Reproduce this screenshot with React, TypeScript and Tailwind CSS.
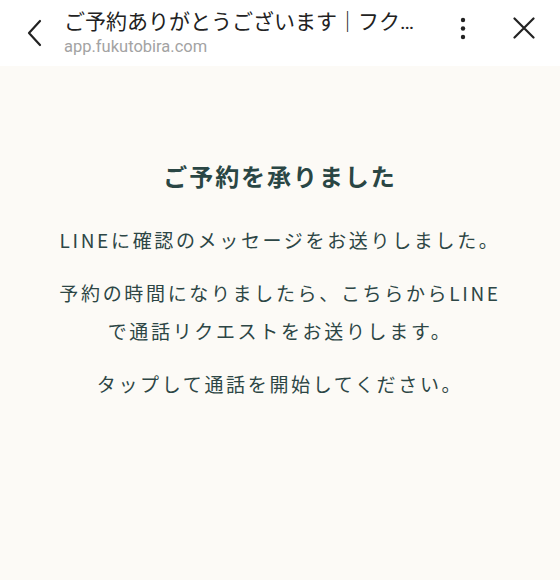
export default function App() {
  return (
    <div
      className="flex min-h-[580px] w-full flex-col bg-[#fcfaf6]"
      style={{ fontFamily: '"Noto Sans CJK JP", "Noto Sans", sans-serif' }}
    >
      {/* ブラウザヘッダー */}
      <header className="flex h-[66px] shrink-0 items-center bg-white">
        <div className="flex w-[64px] shrink-0 justify-center pl-[6px]">
          <svg width="20" height="28" viewBox="0 0 20 28" fill="none">
            <path d="M15 2 L4 14 L15 26" stroke="#222" strokeWidth="2.2" strokeLinecap="round" strokeLinejoin="round" />
          </svg>
        </div>
        <div className="flex min-w-0 flex-1 flex-col">
          <p
            className="truncate text-[21px] leading-[26px] text-[#222]"
            style={{ fontFamily: 'Roboto, "Noto Sans CJK JP", sans-serif' }}
          >
            ご予約ありがとうございます｜フク…
          </p>
          <p
            className="mt-[2px] text-[16.5px] leading-[20px] text-[#a3a3a3]"
            style={{ fontFamily: 'Roboto, "Noto Sans", sans-serif' }}
          >
            app.fukutobira.com
          </p>
        </div>
        <div className="flex w-[82px] shrink-0 justify-center self-start pt-[17px]">
          <svg width="6" height="24" viewBox="0 0 6 24">
            <circle cx="3" cy="3" r="2.2" fill="#222" />
            <circle cx="3" cy="11.5" r="2.2" fill="#222" />
            <circle cx="3" cy="20" r="2.2" fill="#222" />
          </svg>
        </div>
        <div className="flex w-[56px] shrink-0 justify-center self-start pr-[16px] pt-[17px]">
          <svg width="22" height="22" viewBox="0 0 22 22">
            <path d="M1.5 1.5 L20.5 20.5 M20.5 1.5 L1.5 20.5" stroke="#222" strokeWidth="2.2" strokeLinecap="round" />
          </svg>
        </div>
      </header>

      {/* 本文 */}
      <main className="flex flex-col items-center pt-[92px] text-[#2d4645]">
        <h1 className="text-[24px] font-bold leading-[36px] tracking-[0.08em] text-[#2a4644]">
          ご予約を承りました
        </h1>
        <div className="mt-[27px] flex flex-col items-center gap-[15px] text-center text-[19px] leading-[38px] tracking-[0.14em]">
          <p>LINEに確認のメッセージをお送りしました。</p>
          <p>
            予約の時間になりましたら、こちらからLINE
            <br />
            で通話リクエストをお送りします。
          </p>
          <p>タップして通話を開始してください。</p>
        </div>
      </main>
    </div>
  );
}
